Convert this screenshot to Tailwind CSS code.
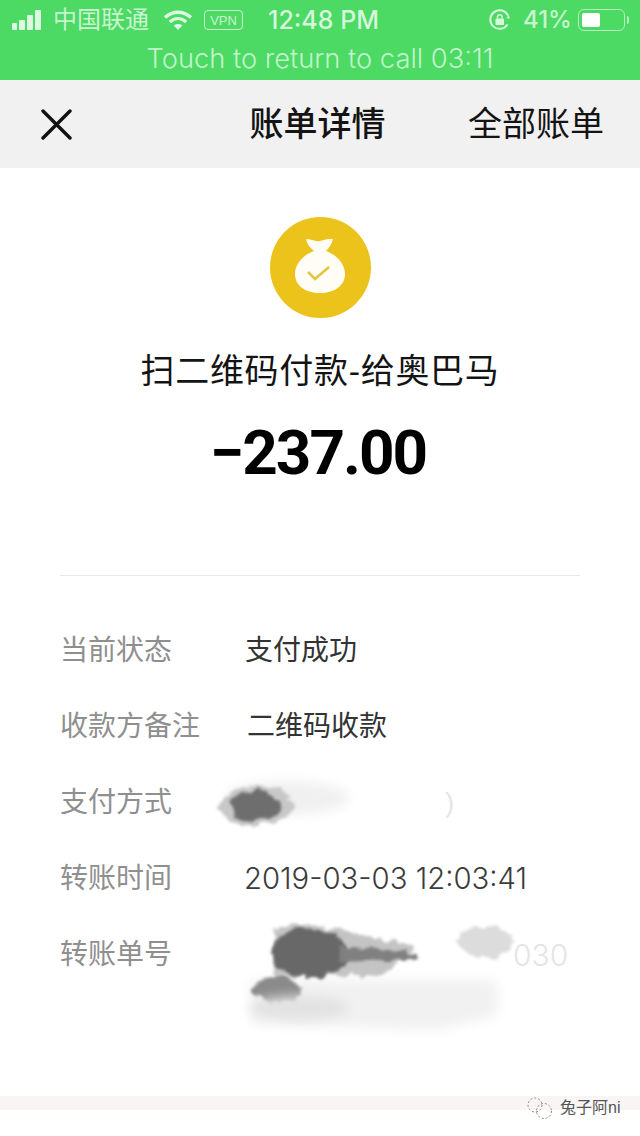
<!DOCTYPE html>
<html lang="zh-CN">
<head>
  <meta charset="UTF-8">
  <meta name="viewport" content="width=device-width, initial-scale=1.0">
  <title>账单详情</title>
  <script src="https://cdn.jsdelivr.net/npm/@tailwindcss/browser@4"></script>
</head>
<body class="bg-white font-['Liberation_Sans','Noto_Sans_CJK_SC',sans-serif]">
  <div class="relative w-[640px] h-[1136px] overflow-hidden bg-white">

    <!-- status bar + call bar -->
    <div class="h-[80px] bg-[#4cd964] text-[#c8f5d0]">
      <div class="h-[40px] flex items-center pl-[12px] pr-[10px]">
        <div class="flex items-end gap-[2px] h-[20px] w-[33px] mb-[1px]">
          <div class="w-[5px] h-[7px] rounded-[1px] bg-[#dcf8e0]"></div>
          <div class="w-[6px] h-[10px] rounded-[1px] bg-[#dcf8e0]"></div>
          <div class="w-[6px] h-[15px] rounded-[1px] bg-[#dcf8e0]"></div>
          <div class="w-[6px] h-[20px] rounded-[1px] bg-[#dcf8e0]"></div>
        </div>
        <span class="ml-[8px] text-[24px] w-[96px] leading-none whitespace-nowrap">中国联通</span>
        <svg class="ml-[14px]" width="30" height="22" viewBox="0 0 30 22" fill="none" stroke="#dcf8e0" stroke-width="3.4">
          <path d="M2 8.5C9.500 1.500 20.500 1.500 28 8.500" />
          <path d="M6.800 13C11.800 8.500 18.200 8.500 23.200 13" />
          <path d="M15 21l-4.300-4.600c2.500-2 6.100-2 8.600 0z" fill="#dcf8e0" stroke="none" />
        </svg>
        <div class="ml-[11px] w-[39px] h-[20px] border-[1.5px] border-[#c8f5d0] rounded-[4px] flex items-center justify-center text-[13px] font-medium leading-none">VPN</div>
        <span class="ml-[25px] w-[111px] text-[25px] font-medium font-['Inter'] leading-none whitespace-nowrap text-[#d6f7dc]">12:48 PM</span>
        <svg class="ml-[109px]" width="24" height="24" viewBox="0 0 24 24" fill="none" stroke="#d6f7dc" stroke-width="2">
          <path d="M19.500 16.500A9.300 9.300 0 1 1 20 7.500" />
          <path d="M21.800 10.500l-3.600-.2 2.800-3.200z" fill="#d6f7dc" stroke="none" />
          <rect x="7.500" y="10.500" width="8.500" height="6.500" rx="1" fill="#d6f7dc" stroke="none" />
          <path d="M9.500 10.500V9a2.300 2.300 0 0 1 4.600 0v1.500" stroke-width="1.500" />
        </svg>
        <span class="ml-[11px] w-[49px] text-[24px] font-medium font-['Inter'] leading-none whitespace-nowrap">41%</span>
        <div class="ml-[6px] w-[47px] h-[22px] border-[1.5px] border-[#b5f0c0] rounded-[6px] p-[3px]">
          <div class="w-[18px] h-full bg-white rounded-[2px]"></div>
        </div>
        <div class="ml-[2px] w-[2px] h-[8px] bg-[#b5f0c0] rounded-r-[2px]"></div>
      </div>
      <div class="h-[40px] flex items-center justify-center pb-[3px] text-[27.300px] font-light font-['Inter'] leading-none text-[#c0f4ca] whitespace-nowrap">Touch to return to call 03:11</div>
    </div>

    <!-- nav -->
    <div class="h-[88px] bg-[#f2f1f2] flex items-center justify-between pl-[41px] pr-[36px] text-[34px] leading-none text-[#141414]">
      <svg width="31" height="31" viewBox="0 0 31 31" stroke="#111" stroke-width="3.400" stroke-linecap="round">
        <path d="M2 2l27 27M29 2L2 29" />
      </svg>
      <span class="ml-[95px] font-medium">账单详情</span>
      <span>全部账单</span>
    </div>

    <!-- summary -->
    <div class="flex flex-col items-center pt-[49px]">
      <div class="w-[101px] h-[101px] rounded-full bg-[#ecc31a] flex items-center justify-center">
        <svg class="mb-[4px]" width="50" height="54" viewBox="0 0 50 54">
          <path d="M11 0c5 0 9 3 14 2 4-1 9-3 13-2-1 5-4 9-7 12 11 4 19 13 19 23 0 12-11 19-25 19S0 47 0 35C0 25 8 16 19 12 15 9 12 5 11 0z" fill="#fffdf5" />
          <path d="M13 33l7 7 14-12" fill="none" stroke="#e3c53f" stroke-width="2.500" />
        </svg>
      </div>
      <div class="mt-[29px] text-[34px] leading-[48px] text-[#141414] whitespace-nowrap tracking-[0.7px]">扫二维码付款-给奥巴马</div>
      <div class="mt-[23px] pr-[4px] text-[62px] leading-[70px] font-bold text-black font-['Roboto'] whitespace-nowrap tracking-[-2px]">−237.00</div>
    </div>

    <!-- details -->
    <div class="mx-[60px] mt-[87px] border-t border-[#e8e8e8] pt-[37px] text-[28px] leading-[76px]">
      <div class="grid grid-cols-[185px_1fr] h-[76px]"><span class="text-[#8f8f8f]">当前状态</span><span class="text-[#333]">支付成功</span></div>
      <div class="grid grid-cols-[187px_1fr] h-[76px]"><span class="text-[#8f8f8f]">收款方备注</span><span class="text-[#333]">二维码收款</span></div>
      <div class="grid grid-cols-[185px_1fr] h-[76px]"><span class="text-[#8f8f8f]">支付方式</span><span class="pl-[200px] text-[#e6e6e6]">)</span></div>
      <div class="grid grid-cols-[184px_1fr] h-[76px]"><span class="text-[#8f8f8f]">转账时间</span><span class="text-[#3c3c3c] text-[29.300px] whitespace-nowrap font-['Inter'] font-light">2019-03-03 12:03:41</span></div>
      <div class="grid grid-cols-[185px_1fr] h-[76px]"><span class="text-[#8f8f8f]">转账单号</span><span class="pl-[268px] text-[#e4e4e4] text-[30px] font-['Inter'] font-light">030</span></div>
    </div>

    <!-- smudges over the payment method and order number -->
    <svg class="absolute left-[190px] top-[760px]" width="400" height="290" viewBox="0 0 400 290">
      <defs>
        <filter id="smudge" x="-20%" y="-40%" width="140%" height="180%">
          <feTurbulence type="fractalNoise" baseFrequency="0.09" numOctaves="3" seed="4" />
          <feDisplacementMap in="SourceGraphic" scale="11" xChannelSelector="R" yChannelSelector="G" />
          <feGaussianBlur stdDeviation="1.500" />
        </filter>
        <filter id="soft" x="-20%" y="-40%" width="140%" height="180%">
          <feGaussianBlur stdDeviation="6" />
        </filter>
      </defs>
      <ellipse cx="97" cy="38" rx="62" ry="17" fill="#f0f0f0" filter="url(#soft)" />
      <ellipse cx="66" cy="46" rx="36" ry="20" fill="#c8c8c8" filter="url(#smudge)" />
      <ellipse cx="66" cy="46" rx="26" ry="15" fill="#6e6e6e" filter="url(#smudge)" />
      <path d="M62 220h245v36l-60 14-185-6-2-44z" fill="#f1f1f1" filter="url(#soft)" />
      <ellipse cx="295" cy="182" rx="28" ry="16" fill="#dcdcdc" filter="url(#smudge)" />
      <path d="M84 168c30-8 60-2 140 20l-30 26-110 4z" fill="#c4c4c4" filter="url(#smudge)" />
      <ellipse cx="120" cy="193" rx="38" ry="25" fill="#686868" filter="url(#smudge)" />
      <path d="M150 186l75 6v7l-75 3z" fill="#808080" filter="url(#smudge)" />
      <ellipse cx="87" cy="230" rx="24" ry="13" fill="#8a8a8a" filter="url(#smudge)" />
      <ellipse cx="110" cy="248" rx="50" ry="12" fill="#e2e2e2" filter="url(#soft)" />
    </svg>

    <!-- bottom strip -->
    <div class="absolute left-0 right-0 top-[1096px] h-[14px] bg-[#f9f5f5]"></div>

    <!-- watermark -->
    <div class="absolute left-[526px] top-[1096px] flex items-center gap-[6px] text-[#555] text-[16px] leading-none whitespace-nowrap">
      <svg width="28" height="24" viewBox="0 0 28 24" fill="none" stroke="#888" stroke-width="1" stroke-dasharray="2 2">
        <circle cx="9" cy="9" r="7" />
        <circle cx="18" cy="15" r="7.500" />
      </svg>
      <span>兔子阿ni</span>
    </div>
  </div>
</body>
</html>
